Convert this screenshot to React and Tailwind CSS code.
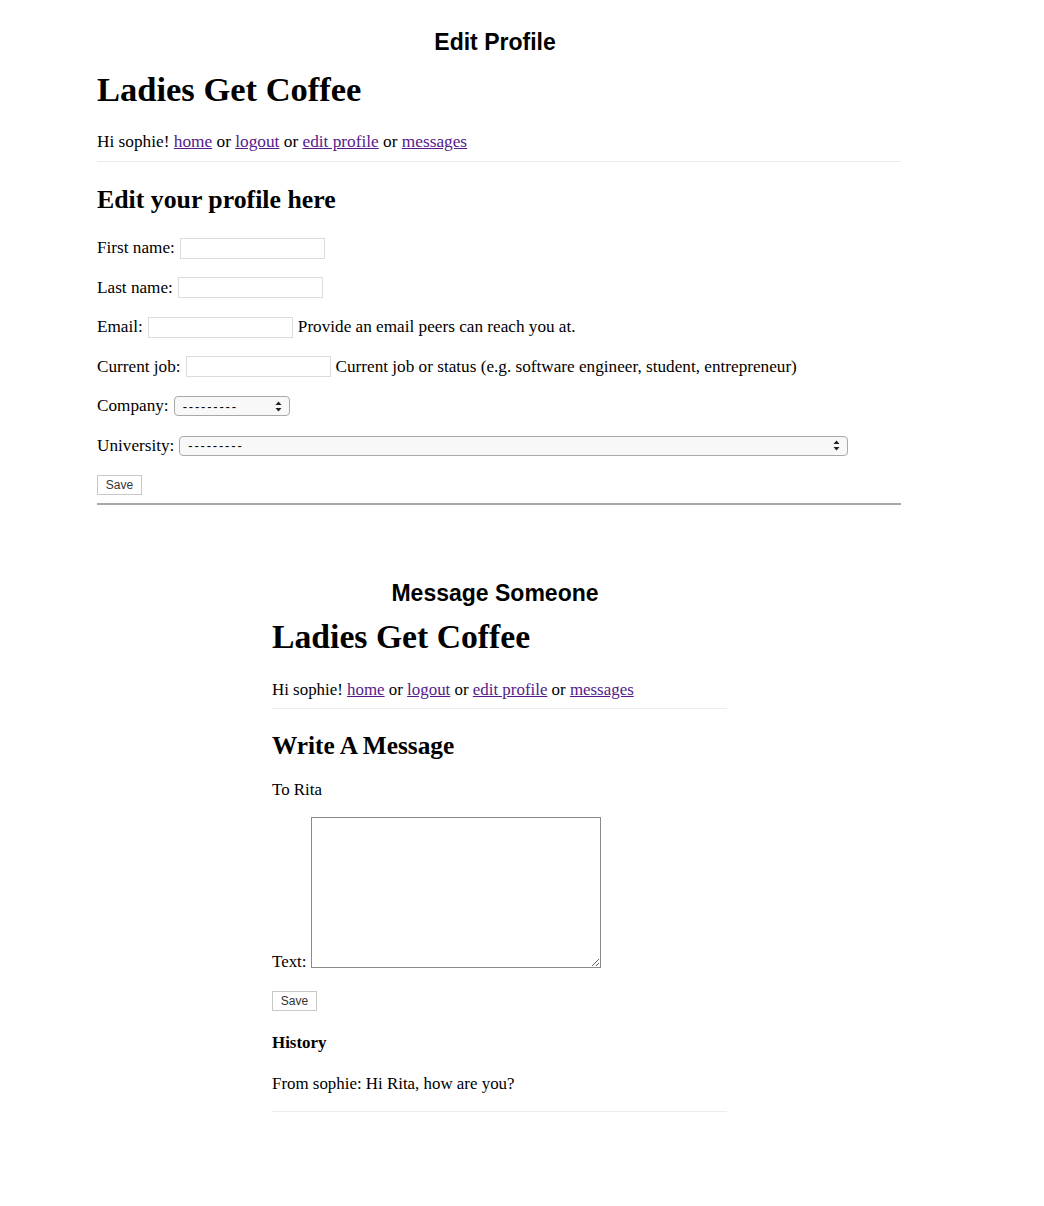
import { useState } from 'react'

// ── Shared bits ───────────────────────────────────────────────────────────────
const serif = "font-['Liberation_Serif','Times_New_Roman',serif]"
const sans = "font-['Liberation_Sans',Arial,sans-serif]"

function Title({ children, className = '' }) {
  return (
    <div className={`w-[990px] text-center ${sans} text-[23px] leading-[28px] font-bold text-black ${className}`}>
      {children}
    </div>
  )
}

function Nav({ size = 'text-[17.3px]' }) {
  const link = 'text-[#551a8b] underline'
  return (
    <p className={`${size} leading-5`}>
      Hi sophie! <a href="#" className={link}>home</a> or <a href="#" className={link}>logout</a> or{' '}
      <a href="#" className={link}>edit profile</a> or <a href="#" className={link}>messages</a>
    </p>
  )
}

function TextInput() {
  return <input type="text" className="w-[145px] h-[21px] border border-[#dcdcdc] bg-white px-1 outline-none" />
}

function SelectBox({ width }) {
  return (
    <span
      className={`inline-flex items-center justify-between h-[20px] ${width} rounded-[4px] border border-[#a9a9a9] bg-[#f8f8f8] pl-[8px] pr-[7px] ${sans} text-[13px] tracking-[1.8px] text-black`}
    >
      <span className="leading-none">---------</span>
      <svg width="7" height="11" viewBox="0 0 7 11">
        <path d="M3.5 0.5 L6.5 4 L0.5 4 Z" fill="#222" />
        <path d="M3.5 10.5 L6.5 7 L0.5 7 Z" fill="#222" />
      </svg>
    </span>
  )
}

function SaveButton() {
  return (
    <button className={`w-[45px] h-[20px] border border-[#c8c8c8] bg-white ${sans} text-[12px] leading-none text-[#333]`}>
      Save
    </button>
  )
}

function Row({ children }) {
  return <div className="flex items-center gap-[5px] h-[22px] text-[17.2px] leading-[22px]">{children}</div>
}

// ── Page ──────────────────────────────────────────────────────────────────────
export default function App() {
  const [msg, setMsg] = useState('')
  return (
    <div className={`w-[1044px] min-h-[1206px] bg-white text-black ${serif}`}>

      {/* Edit Profile screenshot */}
      <Title className="pt-[28px]">Edit Profile</Title>
      <div className="ml-[97px] w-[804px]">
        <h1 className="mt-[13px] text-[34.5px] leading-[40px] font-bold">Ladies Get Coffee</h1>
        <div className="mt-[23px]"><Nav /></div>
        <div className="mt-[9px] h-px bg-[#ececec]" />
        <h2 className="mt-[23px] text-[25.8px] leading-[30px] font-bold">Edit your profile here</h2>

        <div className="mt-[22px] flex flex-col gap-[17.5px]">
          <Row><span>First name:</span><TextInput /></Row>
          <Row><span>Last name:</span><TextInput /></Row>
          <Row><span>Email:</span><TextInput /><span>Provide an email peers can reach you at.</span></Row>
          <Row><span>Current job:</span><TextInput /><span>Current job or status (e.g. software engineer, student, entrepreneur)</span></Row>
          <Row><span>Company:</span><SelectBox width="w-[116px]" /></Row>
          <Row><span>University:</span><SelectBox width="w-[669px]" /></Row>
          <Row><SaveButton /></Row>
        </div>
        <div className="mt-[7px] h-[2px] bg-[#a8a8a8]" />
      </div>

      {/* Message Someone screenshot (captured a touch smaller) */}
      <Title className="mt-[74px]">Message Someone</Title>
      <div className="ml-[272px] w-[455px]">
        <h1 className="mt-[10px] text-[33.7px] leading-[40px] font-bold">Ladies Get Coffee</h1>
        <div className="mt-[23px]"><Nav size="text-[16.9px]" /></div>
        <div className="mt-[8px] h-px bg-[#ececec]" />
        <h2 className="mt-[21px] text-[25.3px] leading-[30px] font-bold">Write A Message</h2>
        <p className="mt-[20px] text-[16.9px] leading-5">To Rita</p>

        <div className="mt-[17px] flex items-end gap-[5px]">
          <label className="text-[16.9px] leading-5 -mb-1">Text:</label>
          <textarea
            value={msg}
            onChange={e => setMsg(e.target.value)}
            className="w-[290px] h-[151px] border border-[#8a8a8a] bg-white outline-none block"
          />
        </div>

        <div className="mt-[20px]"><SaveButton /></div>
        <h4 className="mt-[21px] text-[16.9px] leading-5 font-bold">History</h4>
        <p className="mt-[21px] text-[16.9px] leading-5">From sophie: Hi Rita, how are you?</p>
        <div className="mt-[17px] h-px bg-[#ececec]" />
      </div>

    </div>
  )
}
